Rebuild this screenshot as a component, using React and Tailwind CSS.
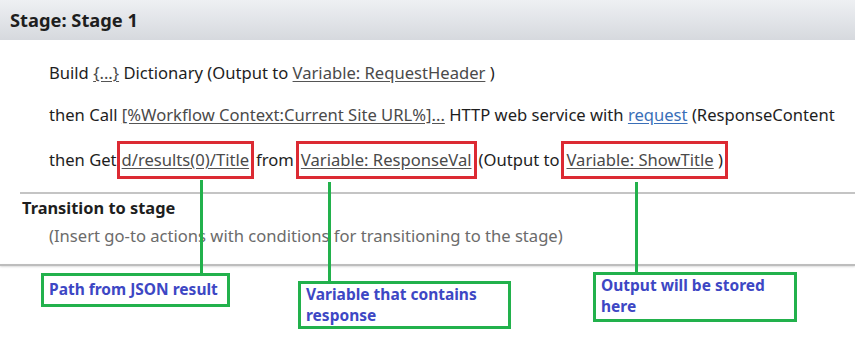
import React from 'react';

const font = { fontFamily: '"Noto Sans", "Open Sans", sans-serif' };

const Link = ({ children, blue }) => (
  <span className={`underline underline-offset-2 ${blue ? 'text-[#3a6fb8] decoration-[#3a6fb8]' : 'text-[#4a4a4a] decoration-[#555]'}`}>
    {children}
  </span>
);

const Boxed = ({ children }) => (
  <span className="inline-block border-[3px] border-[#dc2a33] px-[2px] py-[4px] leading-[24px]">
    {children}
  </span>
);

const Note = ({ children, className }) => (
  <div className={`absolute border-[3px] border-[#22b14c] bg-white px-[5px] text-[15.5px] font-bold text-[#3d47c4] ${className}`}>
    {children}
  </div>
);

const Stem = ({ className }) => <div className={`absolute w-[3px] bg-[#22b14c] ${className}`} />;

export default function App() {
  return (
    <div className="relative h-[337px] w-[855px] overflow-hidden bg-white text-[#1e1e1e]" style={font}>
      <div className="flex h-[40px] items-center bg-gradient-to-b from-[#eef0f3] to-[#d6d9de] pl-[10px] text-[18.3px] font-bold">
        Stage: Stage 1
      </div>

      <div className="whitespace-nowrap pl-[49px] pt-[21px] text-[16.6px]">
        <div className="leading-[24px]">
          Build <Link>{'{...}'}</Link> Dictionary (Output to <Link>Variable: RequestHeader</Link> )
        </div>
        <div className="mt-[18px] leading-[24px]">
          then Call <Link>[%Workflow Context:Current Site URL%]...</Link> HTTP web service with <Link blue>request</Link> (ResponseContent
        </div>
        <div className="mt-[14px] flex items-center leading-[24px]">
          <span>then Get</span>
          <Boxed><Link>d/results(0)/Title</Link></Boxed>
          <span className="mx-[2px]">from</span>
          <Boxed><Link>Variable: ResponseVal</Link></Boxed>
          <span className="mx-[2px]">(Output to</span>
          <Boxed>
            <Link>Variable: ShowTitle</Link> )
          </Boxed>
        </div>
      </div>

      <div className="ml-[20px] mt-[13px] border-t-2 border-[#c4c4c4]" />
      <div className="pl-[22px] pt-[3px] text-[16.4px] font-bold leading-[22px]">Transition to stage</div>
      <div className="pl-[49px] pt-[6px] text-[16.6px] leading-[22px] text-[#6b6b6b]">
        (Insert go-to actions with conditions for transitioning to the stage)
      </div>
      <div className="mt-[17px] border-t-2 border-[#bdbdbd] shadow-[0_1px_2px_rgba(0,0,0,0.15)]" />

      <Stem className="left-[200px] top-[180px] h-[95px]" />
      <Stem className="left-[328px] top-[182px] h-[101px]" />
      <Stem className="left-[635px] top-[182px] h-[92px]" />

      <Note className="left-[41px] top-[273px] h-[34px] w-[189px] leading-[26px]">Path from JSON result</Note>
      <Note className="left-[298px] top-[281px] h-[48px] w-[213px] leading-[21px]">
        Variable that contains
        <br />
        response
      </Note>
      <Note className="left-[593px] top-[272px] h-[50px] w-[204px] leading-[21px]">
        Output will be stored
        <br />
        here
      </Note>
    </div>
  );
}
